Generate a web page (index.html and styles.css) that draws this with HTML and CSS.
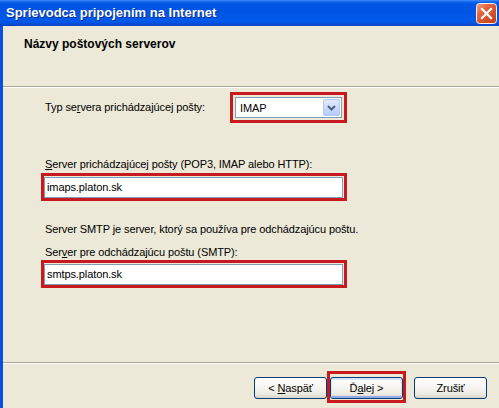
FILE: index.html
```html
<!DOCTYPE html>
<html lang="sk">
<head>
<meta charset="utf-8">
<title>Sprievodca pripojením na Internet</title>
<link rel="stylesheet" href="styles.css">
</head>
<body>
<div class="window">
  <div class="titlebar">
    <span class="title">Sprievodca pripojením na Internet</span>
    <button class="close" type="button" aria-label="Zavrieť">
      <svg width="21" height="21" viewBox="0 0 21 21">
        <defs>
          <linearGradient id="closeFill" x1="0" y1="0" x2="1" y2="1">
            <stop offset="0" stop-color="#F0A58C"/>
            <stop offset="0.35" stop-color="#E2643D"/>
            <stop offset="1" stop-color="#C13A14"/>
          </linearGradient>
        </defs>
        <rect x="0.5" y="0.5" width="20" height="20" rx="3" fill="url(#closeFill)" stroke="#F4F0F0"/>
        <path d="M6 6 L15 15 M15 6 L6 15" stroke="#fff" stroke-width="2.2" stroke-linecap="square"/>
      </svg>
    </button>
  </div>

  <div class="frame">
    <div class="header">
      <h1>Názvy poštových serverov</h1>
    </div>
    <div class="rule"></div>

    <div class="content">
      <div class="row">
        <label class="row-label">Typ se<u>r</u>vera prichádzajúcej pošty:</label>
        <div class="mark mark-combo">
          <div class="combo">
            <span class="combo-value">IMAP</span>
            <span class="combo-btn">
              <svg width="9" height="6" viewBox="0 0 9 6"><path d="M1 1 L4.5 4.5 L8 1" fill="none" stroke="#4D6185" stroke-width="2"/></svg>
            </span>
          </div>
        </div>
      </div>

      <label class="field-label incoming"><u>S</u>erver prichádzajúcej pošty (POP3, IMAP alebo HTTP):</label>
      <div class="mark mark-field mark-in">
        <div class="textbox">imaps.platon.sk</div>
      </div>

      <p class="note">Server SMTP je server, ktorý sa používa pre odchádzajúcu poštu.</p>

      <label class="field-label outgoing">Ser<u>v</u>er pre odchádzajúcu poštu (SMTP):</label>
      <div class="mark mark-field mark-out">
        <div class="textbox">smtps.platon.sk</div>
      </div>
    </div>

    <div class="rule"></div>
    <div class="footer">
      <button class="btn" type="button">&lt; <u>N</u>aspäť</button>
      <div class="mark mark-btn">
        <button class="btn btn-default" type="button">Ď<u>a</u>lej &gt;</button>
      </div>
      <button class="btn" type="button">Zrušiť</button>
    </div>
  </div>
</div>
</body>
</html>
```

FILE: styles.css
```css
* {
  box-sizing: border-box;
}

html,
body {
  margin: 0;
  padding: 0;
}

body {
  width: 499px;
  height: 408px;
  overflow: hidden;
  background: #ECE9D8;
  font-family: "Liberation Sans", Arial, sans-serif;
  font-size: 11px;
  letter-spacing: -0.1px;
  color: #000;
}

.window {
  display: flex;
  flex-direction: column;
  height: 408px;
}

/* Luna caption bar */
.titlebar {
  height: 26px;
  flex: none;
  display: flex;
  align-items: center;
  justify-content: space-between;
  padding: 0 2px 0 6px;
  background: linear-gradient(180deg,
    #3D8DF8 0px,
    #0F63EA 2px,
    #0056E6 4px,
    #0054E3 11px,
    #0058EA 18px,
    #005AEC 21px,
    #004ED8 24px,
    #0040C0 26px);
}

.title {
  color: #fff;
  font-family: "Liberation Sans", Arial, sans-serif;
  font-weight: bold;
  font-size: 13px;
  line-height: 16px;
  letter-spacing: 0;
  text-shadow: 1px 1px 0 #0B2A8E;
}

.close {
  width: 21px;
  height: 21px;
  padding: 0;
  margin: 1px 0 0;
  border: 0;
  background: none;
  display: block;
}

.close svg {
  display: block;
}

/* dialog body with the blue window edge on the left */
.frame {
  flex: 1;
  display: flex;
  flex-direction: column;
  border-left: 3px solid #0B4FDC;
}

.header {
  height: 60px;
  flex: none;
  padding: 11px 0 0 21px;
}

.header h1 {
  margin: 0;
  font-size: 12px;
  font-weight: bold;
  line-height: 14px;
  letter-spacing: 0;
}

.rule {
  height: 2px;
  flex: none;
  border-top: 1px solid #ACA899;
  background: #fff;
}

.content {
  flex: 1;
  padding: 4px 0 0 42px;
}

.row {
  display: flex;
  align-items: center;
}

.row-label {
  width: 185px;
  line-height: 13px;
}

/* red highlight frames */
.mark {
  border: 3px solid #C8191E;
}

.mark-combo {
  padding: 2px;
}

.combo {
  width: 107px;
  height: 21px;
  display: flex;
  align-items: center;
  justify-content: space-between;
  padding: 1px;
  border: 1px solid #7F9DB9;
  background: #fff;
}

.combo-value {
  padding-left: 3px;
}

.combo-btn {
  width: 17px;
  height: 17px;
  display: flex;
  align-items: center;
  justify-content: center;
  border: 1px solid #B4C8F6;
  border-radius: 2px;
  background: linear-gradient(180deg, #E3ECFE 0%, #CCDBFB 50%, #B6CBF8 100%);
}

.combo-btn svg {
  display: block;
}

.field-label {
  display: block;
  line-height: 13px;
}

.incoming {
  margin-top: 35px;
}

.outgoing {
  margin-top: 10px;
}

.mark-field {
  width: 306px;
  margin-left: -4px;
  padding: 1px 1px 0 0;
}

.mark-in {
  margin-top: 2px;
}

.mark-out {
  margin-top: 1px;
}

.textbox {
  height: 21px;
  padding: 0 2px;
  border: 1px solid #7F9DB9;
  background: #fff;
  line-height: 19px;
}

.note {
  margin: 22px 0 0;
  line-height: 13px;
}

.footer {
  height: 44px;
  flex: none;
  display: flex;
  justify-content: flex-end;
  align-items: flex-start;
  padding: 13px 12px 0 0;
}

.btn {
  width: 73px;
  height: 22px;
  padding: 0;
  border: 1px solid #003C74;
  border-radius: 3px;
  background: linear-gradient(180deg, #FFFFFF 0%, #F6F5F1 45%, #ECEAE2 80%, #D8D3C8 100%);
  font-family: "Liberation Sans", Arial, sans-serif;
  font-size: 11px;
  letter-spacing: -0.1px;
  color: #000;
  display: block;
}

.btn-default {
  box-shadow: inset 0 1px 0 1px #CEE7FF, inset 0 -1px 0 1px #8EABEA;
}

.mark-btn {
  margin: -6px 8px 0 0;
  padding: 3px 0 1px;
}
```
